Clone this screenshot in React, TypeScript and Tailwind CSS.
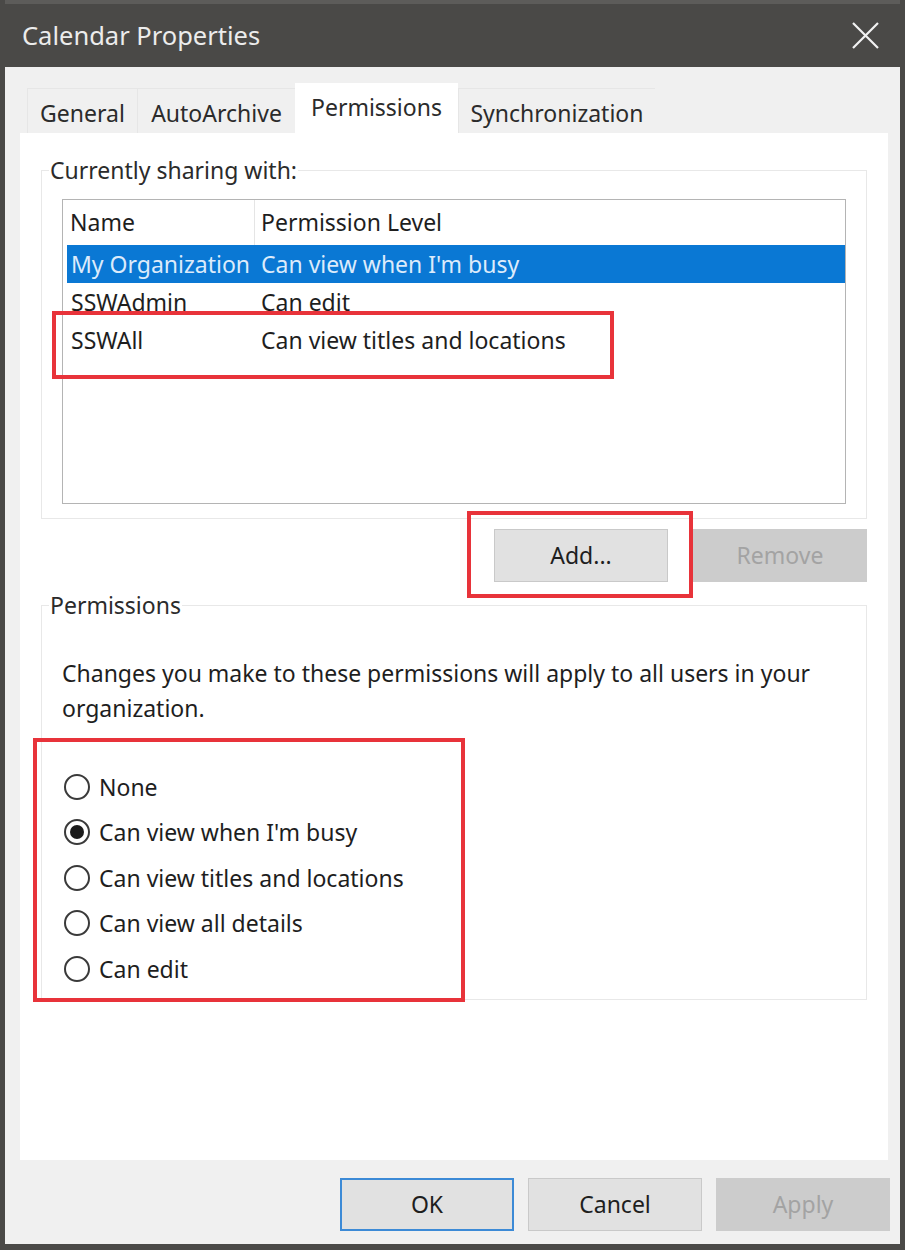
import React, { useState } from "react";

const font = { fontFamily: '"Noto Sans", "Open Sans", sans-serif' };

const tabs = [
  { label: "General", w: "w-[110px]" },
  { label: "AutoArchive", w: "w-[158px]" },
  { label: "Permissions", w: "w-[163px]" },
  { label: "Synchronization", w: "w-[197px]" },
];

const rows = [
  { name: "My Organization", level: "Can view when I'm busy" },
  { name: "SSWAdmin", level: "Can edit" },
  { name: "SSWAll", level: "Can view titles and locations" },
];

const options = [
  "None",
  "Can view when I'm busy",
  "Can view titles and locations",
  "Can view all details",
  "Can edit",
];

function Radio({ label, checked, onSelect }: { label: string; checked: boolean; onSelect: () => void }) {
  return (
    <button onClick={onSelect} className="flex h-[45.5px] items-center pl-[2px] text-left">
      <span className="flex h-[26px] w-[26px] items-center justify-center rounded-full border-2 border-[#3a3a3a] bg-white">
        {checked && <span className="h-[14px] w-[14px] rounded-full bg-[#1b1b1b]" />}
      </span>
      <span className="ml-[9px] text-[23px] text-[#1e1e1e]">{label}</span>
    </button>
  );
}

function DialogButton({
  children,
  disabled,
  primary,
}: {
  children: React.ReactNode;
  disabled?: boolean;
  primary?: boolean;
}) {
  return (
    <button
      disabled={disabled}
      className={`h-[53px] w-[174px] text-[23px] ${
        disabled
          ? "border border-[#cccccc] bg-[#cccccc] text-[#a3a3a3]"
          : primary
          ? "border-2 border-[#3c8ad6] bg-[#e1e1e1] text-[#1e1e1e]"
          : "border border-[#c9c9c9] bg-[#e1e1e1] text-[#1e1e1e]"
      }`}
    >
      {children}
    </button>
  );
}

export default function App() {
  const [level, setLevel] = useState(1);

  return (
    <div style={font} className="flex h-[1250px] w-[905px] flex-col border-x-[5px] border-b-[6px] border-[#4a4947] bg-[#4a4947]">
      {/* title bar */}
      <div className="flex h-[67px] items-center justify-between border-t-[4px] border-[#5d5c5a] pl-[17px] pr-[21px]">
        <span className="text-[25.5px] text-[#ececec]">Calendar Properties</span>
        <svg width="27" height="27" viewBox="0 0 27 27" className="text-[#f2f2f2]">
          <path d="M1 1L26 26M26 1L1 26" stroke="currentColor" strokeWidth="2.2" fill="none" />
        </svg>
      </div>

      <div className="flex flex-1 flex-col bg-[#f0f0f0] pl-[15px] pr-[12px] pt-[16px]">
        {/* tabs */}
        <div className="flex h-[50px] items-end pl-[7px]">
          {tabs.map((t) => {
            const active = t.label === "Permissions";
            return (
              <div
                key={t.label}
                className={`flex items-center justify-center text-[23px] text-[#2b2b2b] ${t.w} ${
                  active
                    ? "h-[50px] bg-white pb-[2px]"
                    : "h-[45px] border-l border-t border-[#e6e6e6] bg-[#f0f0f0] pt-[4px]"
                }`}
              >
                {t.label}
              </div>
            );
          })}
        </div>

        {/* page */}
        <div className="relative flex h-[1027px] flex-col bg-white px-[21px] pt-[16px]">
          <fieldset className="border border-[#e8e8e8] px-[20px] pb-[14px] pt-[8px]">
            <legend className="-ml-[13px] px-[1px] text-[23px] leading-[42px] text-[#2b2b2b]">Currently sharing with:</legend>
            <div className="h-[305px] border border-[#b4b4b4] text-[23px]">
              <div className="flex h-[45px] items-center text-[#1e1e1e]">
                <div className="flex h-full w-[192px] items-center border-r border-[#e5e5e5] pl-[7px]">Name</div>
                <div className="pl-[6px]">Permission Level</div>
              </div>
              {rows.map((r, i) => (
                <div
                  key={r.name}
                  className={`ml-[4px] flex h-[38px] items-center ${
                    i === 0 ? "bg-[#0a78d4] text-[#dcebfb]" : "text-[#1e1e1e]"
                  }`}
                >
                  <div className="w-[188px] whitespace-nowrap pl-[4px]">{r.name}</div>
                  <div className="whitespace-nowrap pl-[6px]">{r.level}</div>
                </div>
              ))}
            </div>
          </fieldset>

          <div className="flex justify-end gap-[25px] pt-[10px]">
            <DialogButton>Add...</DialogButton>
            <DialogButton disabled>Remove</DialogButton>
          </div>

          <fieldset className="mt-[3px] h-[415px] border border-[#e8e8e8] px-[20px]">
            <legend className="-ml-[13px] px-[1px] text-[23px] leading-[40px] text-[#2b2b2b]">Permissions</legend>
            <p className="mt-[31px] text-[23px] leading-[35px] text-[#1e1e1e]">
              Changes you make to these permissions will apply to all users in your organization.
            </p>
            <div className="mt-[38px] flex flex-col items-start">
              {options.map((o, i) => (
                <Radio key={o} label={o} checked={level === i} onSelect={() => setLevel(i)} />
              ))}
            </div>
          </fieldset>

          {/* annotation boxes */}
          <div className="pointer-events-none absolute left-[32px] top-[178px] h-[68px] w-[562px] border-4 border-[#e8333a]" />
          <div className="pointer-events-none absolute left-[447px] top-[378px] h-[87px] w-[226px] border-4 border-[#e8333a]" />
          <div className="pointer-events-none absolute left-[13px] top-[605px] h-[264px] w-[432px] border-4 border-[#e8333a]" />
        </div>

        {/* footer buttons */}
        <div className="flex justify-end gap-[14px] pt-[18px]">
          <DialogButton primary>OK</DialogButton>
          <DialogButton>Cancel</DialogButton>
          <div className="-mr-[2px]">
            <DialogButton disabled>Apply</DialogButton>
          </div>
        </div>
      </div>
    </div>
  );
}
